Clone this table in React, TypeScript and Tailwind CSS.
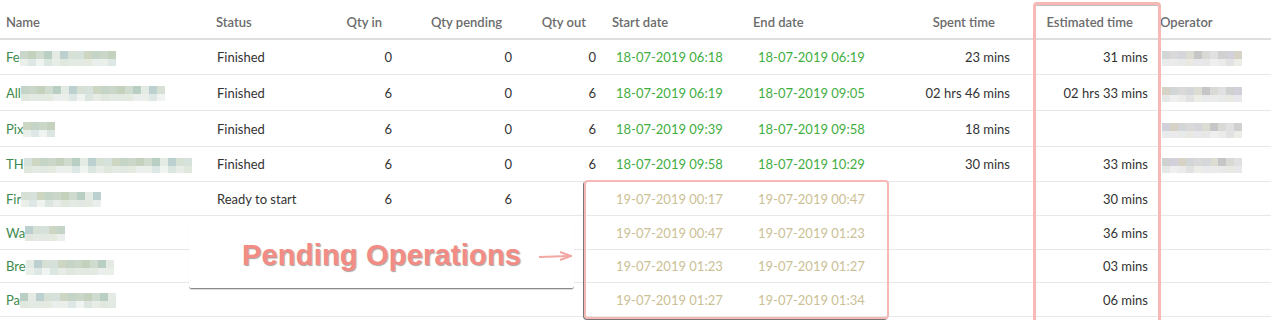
import React from "react";

type Col = {
  key: string;
  label: string;
  width: string;
  head: string;
  cell: string;
};

const columns: Col[] = [
  { key: "name", label: "Name", width: "w-[205px]", head: "pl-[6px] text-left", cell: "pl-[6px] text-left" },
  { key: "status", label: "Status", width: "w-[125px]", head: "pl-[11px] text-left", cell: "pl-[12px] text-left" },
  { key: "qtyIn", label: "Qty in", width: "w-[72px]", head: "pr-[20px] text-right", cell: "pr-[10px] text-right" },
  { key: "qtyPending", label: "Qty pending", width: "w-[120px]", head: "pr-[20px] text-right", cell: "pr-[10px] text-right" },
  { key: "qtyOut", label: "Qty out", width: "w-[84px]", head: "pr-[20px] text-right", cell: "pr-[10px] text-right" },
  { key: "start", label: "Start date", width: "w-[142px]", head: "pl-[6px] text-left", cell: "pl-[10px] text-left" },
  { key: "end", label: "End date", width: "w-[142px]", head: "pl-[5px] text-left", cell: "pl-[10px] text-left" },
  { key: "spent", label: "Spent time", width: "w-[130px]", head: "pr-[25px] text-right", cell: "pr-[10px] text-right" },
  { key: "estimated", label: "Estimated time", width: "w-[138px]", head: "pr-[25px] text-right", cell: "pr-[10px] text-right" },
  { key: "operator", label: "Operator", width: "flex-1", head: "pl-[2px] text-left", cell: "pl-[4px] text-left" },
];

type Row = {
  prefix: string;
  blur: number;
  status: string;
  qtyIn: string;
  qtyPending: string;
  qtyOut: string;
  start: string;
  end: string;
  spent: string;
  estimated: string;
  operator: boolean;
  pending: boolean;
  height: string;
};

const rows: Row[] = [
  { prefix: "Fe", blur: 12, status: "Finished", qtyIn: "0", qtyPending: "0", qtyOut: "0", start: "18-07-2019 06:18", end: "18-07-2019 06:19", spent: "23 mins", estimated: "31 mins", operator: true, pending: false, height: "h-[35px]" },
  { prefix: "All", blur: 18, status: "Finished", qtyIn: "6", qtyPending: "0", qtyOut: "6", start: "18-07-2019 06:19", end: "18-07-2019 09:05", spent: "02 hrs 46 mins", estimated: "02 hrs 33 mins", operator: true, pending: false, height: "h-[36px]" },
  { prefix: "Pix", blur: 4, status: "Finished", qtyIn: "6", qtyPending: "0", qtyOut: "6", start: "18-07-2019 09:39", end: "18-07-2019 09:58", spent: "18 mins", estimated: "", operator: true, pending: false, height: "h-[36px]" },
  { prefix: "TH", blur: 21, status: "Finished", qtyIn: "6", qtyPending: "0", qtyOut: "6", start: "18-07-2019 09:58", end: "18-07-2019 10:29", spent: "30 mins", estimated: "33 mins", operator: true, pending: false, height: "h-[35px]" },
  { prefix: "Fir", blur: 10, status: "Ready to start", qtyIn: "6", qtyPending: "6", qtyOut: "", start: "19-07-2019 00:17", end: "19-07-2019 00:47", spent: "", estimated: "30 mins", operator: false, pending: true, height: "h-[34px]" },
  { prefix: "Wa", blur: 5, status: "", qtyIn: "", qtyPending: "", qtyOut: "", start: "19-07-2019 00:47", end: "19-07-2019 01:23", spent: "", estimated: "36 mins", operator: false, pending: true, height: "h-[34px]" },
  { prefix: "Bre", blur: 11, status: "", qtyIn: "", qtyPending: "", qtyOut: "", start: "19-07-2019 01:23", end: "19-07-2019 01:27", spent: "", estimated: "03 mins", operator: false, pending: true, height: "h-[33px]" },
  { prefix: "Pa", blur: 12, status: "", qtyIn: "", qtyPending: "", qtyOut: "", start: "19-07-2019 01:27", end: "19-07-2019 01:34", spent: "", estimated: "06 mins", operator: false, pending: true, height: "h-[34px]" },
];

const greens = ["#c9d6c8", "#b9cfc3", "#d7e0d5", "#c4d4c6", "#d0dbcf", "#bcd0cf", "#ccd6c2", "#c3d1bd", "#e3ebe4", "#d6e1dc"];
const greys = ["#d9d9d9", "#c6c6c6", "#cfd1d1", "#d2d6d6", "#dcdcd2", "#e0e0e0", "#d6d2c6", "#d4d6da", "#d9d9d6", "#d2d0da"];

function Pixelated({ count, palette, seed }: { count: number; palette: string[]; seed: number }) {
  const cells = Array.from({ length: count });
  return (
    <span className="inline-flex flex-col align-middle">
      <span className="flex">
        {cells.map((_, i) => (
          <span
            key={i}
            className="block h-[8px] w-[8px]"
            style={{ background: palette[(i * 7 + seed * 3) % palette.length] }}
          />
        ))}
      </span>
      <span className="flex opacity-50">
        {cells.map((_, i) => (
          <span
            key={i}
            className="block h-[7px] w-[8px]"
            style={{ background: palette[(i * 3 + seed * 5 + 2) % palette.length] }}
          />
        ))}
      </span>
    </span>
  );
}

function cellContent(row: Row, key: string, index: number) {
  switch (key) {
    case "name":
      return (
        <span className="flex items-center">
          <span className="text-[#3d8a4e]">{row.prefix}</span>
          <Pixelated count={row.blur} palette={greens} seed={index} />
        </span>
      );
    case "start":
    case "end":
      return (
        <span className={row.pending ? "text-[#cbbf95]" : "text-[#3fae3f]"}>
          {row[key]}
        </span>
      );
    case "operator":
      return row.operator ? <Pixelated count={10} palette={greys} seed={index + 1} /> : null;
    default:
      return <span>{(row as unknown as Record<string, string>)[key]}</span>;
  }
}

export default function App() {
  return (
    <div className="relative h-[320px] w-[1271px] overflow-hidden bg-white font-['Lato',sans-serif] text-[13px] text-[#333]">
      <div className="flex h-[40px] items-center border-b-2 border-[#dedede] pt-[7px] font-semibold text-[#6b6b6b]">
        {columns.map((col) => (
          <div key={col.key} className={`${col.width} ${col.head} shrink-0`}>
            {col.label}
          </div>
        ))}
      </div>

      {rows.map((row, i) => (
        <div key={i} className={`flex ${row.height} items-center border-b border-[#e8e8e8] pt-[2px]`}>
          {columns.map((col) => (
            <div key={col.key} className={`${col.width} ${col.cell} shrink-0 whitespace-nowrap`}>
              {cellContent(row, col.key, i)}
            </div>
          ))}
        </div>
      ))}

      {/* highlight around the estimated time column */}
      <div className="pointer-events-none absolute left-[1033px] top-[2px] h-[340px] w-[128px] rounded-t-[4px] border-[3px] border-[#f6b9b5] shadow-[inset_0_1px_0_#bdbdbd]" />

      {/* highlight around the pending dates */}
      <div className="pointer-events-none absolute left-[584px] top-[180px] h-[139px] w-[305px] rounded-[4px] border-2 border-[#f5b8b4] shadow-[-1px_1px_0_#777]" />

      {/* annotation label */}
      <div className="absolute left-[189px] top-[223px] flex h-[66px] w-[385px] items-center rounded-b-[3px] border-b border-[#8a8a8a] bg-white pl-[53px] shadow-[0_1px_1px_rgba(0,0,0,0.15)]">
        <span className="font-['Liberation_Sans',Arial,sans-serif] text-[29px] font-bold tracking-[0.2px] text-[#f28c84] [text-shadow:1px_1px_1px_rgba(90,90,90,0.55)]">
          Pending Operations
        </span>
        <svg className="ml-[17px]" width="34" height="12" viewBox="0 0 34 12" fill="none">
          <path d="M1 7 L31 6" stroke="#f3a7a2" strokeWidth="2" />
          <path d="M22 2 L33 6 L22 10" stroke="#f3a7a2" strokeWidth="2" fill="none" />
        </svg>
      </div>
    </div>
  );
}
